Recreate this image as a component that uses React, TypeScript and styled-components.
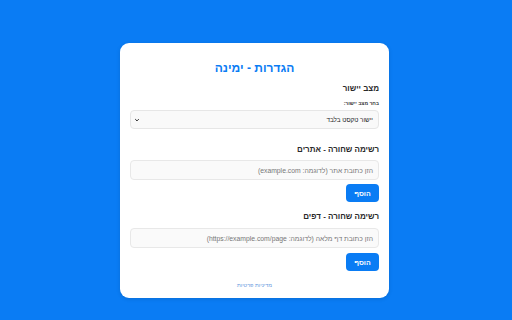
import styled, { createGlobalStyle } from 'styled-components';

const GlobalStyle = createGlobalStyle`
html, body {
  margin: 0;
  padding: 0;
  background: #0a7cf4;
  font-family: "Liberation Sans", Arial, sans-serif;
}
`

const Page = styled.div`
width: 509px;
height: 320px;
display: flex;
justify-content: center;
align-items: flex-start;
padding-top: 43px;
box-sizing: border-box;
`

const Card = styled.div`
direction: rtl;
width: 269px;
background: #ffffff;
border-radius: 9px;
padding: 17px 10px 9px;
box-sizing: border-box;
display: flex;
flex-direction: column;
box-shadow: 0 1px 4px rgba(0, 0, 0, 0.12);
`

const Title = styled.h1`
margin: 0;
font-size: 12px;
line-height: 16px;
font-weight: bold;
color: #0a7cf4;
text-align: center;
`

const Heading = styled.h2<{ $top: number }>`
margin: ${p => p.$top}px 0 0;
font-size: 8px;
line-height: 12px;
font-weight: bold;
color: #2a2a2a;
`

const Label = styled.label`
margin-top: 4px;
font-size: 5px;
line-height: 8px;
font-weight: bold;
color: #333;
`

const SelectBox = styled.div`
position: relative;
margin-top: 3px;
height: 19px;
border: 1px solid #e6e6e6;
border-radius: 4px;
background: #f9f9f9;
box-sizing: border-box;
display: flex;
align-items: center;
padding-right: 5px;
font-size: 6.3px;
color: #222;
`

const Chevron = styled.svg`
position: absolute;
left: 3px;
top: 6px;
`

const Field = styled.div<{ $top: number }>`
margin-top: ${p => p.$top}px;
height: 20px;
border: 1px solid #e8e8e8;
border-radius: 4px;
background: #fafafa;
box-sizing: border-box;
display: flex;
align-items: center;
padding-right: 5px;
font-size: 6.8px;
color: #777;
`

const Button = styled.button<{ $top: number }>`
align-self: flex-start;
margin-top: ${p => p.$top}px;
width: 33px;
height: 18px;
border: none;
border-radius: 4px;
background: #0a7cf4;
color: #fff;
font-family: inherit;
font-size: 7px;
font-weight: bold;
padding: 0;
`

const Footer = styled.a`
margin-top: 10px;
align-self: center;
font-size: 5.5px;
line-height: 8px;
color: #6b9be0;
text-decoration: none;
`

export default function App() {
  return (
    <>
      <GlobalStyle />
      <Page>
        <Card>
          <Title>הגדרות - ימינה</Title>
          <Heading $top={7}>מצב יישור</Heading>
          <Label>בחר מצב יישור:</Label>
          <SelectBox>
            יישור טקסט בלבד
            <Chevron width="6" height="6" viewBox="0 0 10 10">
              <path d="M2 3.5 L5 6.5 L8 3.5" fill="none" stroke="#222" strokeWidth="1.6" />
            </Chevron>
          </SelectBox>
          <Heading $top={15}>רשימה שחורה - אתרים</Heading>
          <Field $top={4}>הזן כתובת אתר (לדוגמה: example.com)</Field>
          <Button $top={4}>הוסף</Button>
          <Heading $top={9}>רשימה שחורה - דפים</Heading>
          <Field $top={5}>הזן כתובת דף מלאה (לדוגמה: https://example.com/page)</Field>
          <Button $top={5}>הוסף</Button>
          <Footer href="#">מדיניות פרטיות</Footer>
        </Card>
      </Page>
    </>
  );
}
